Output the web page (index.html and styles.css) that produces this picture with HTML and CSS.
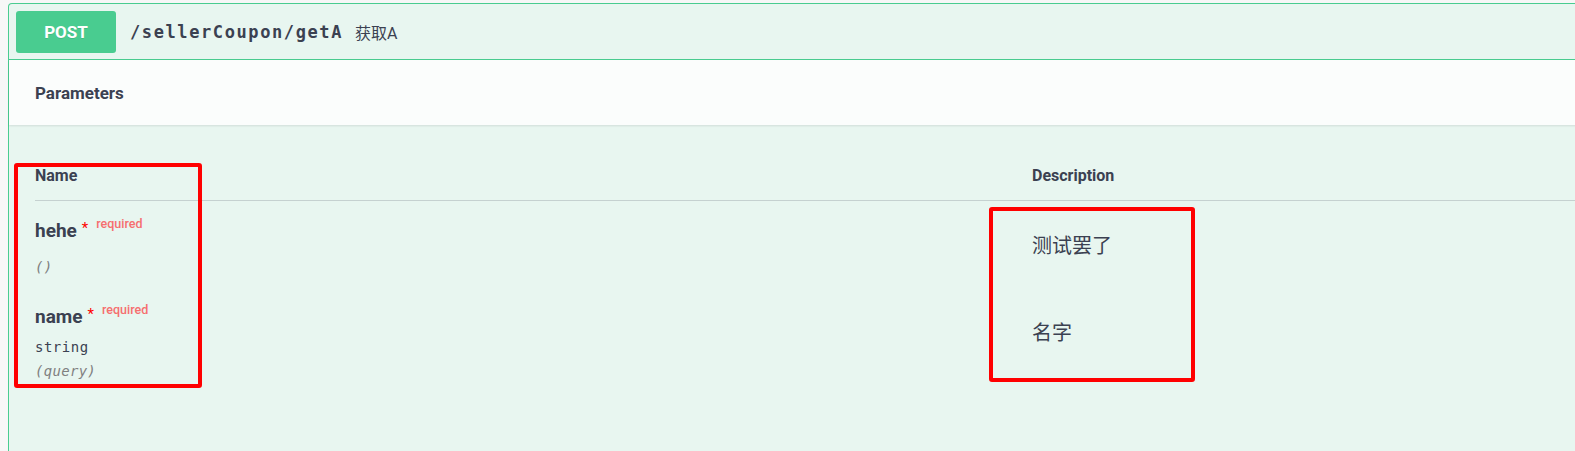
FILE: index.html
```html
<!DOCTYPE html>
<html lang="zh">
<head>
<meta charset="utf-8">
<title>POST /sellerCoupon/getA</title>
<link rel="stylesheet" href="styles.css">
</head>
<body>
<div class="page">
  <div class="opblock">
    <div class="summary">
      <span class="method">POST</span>
      <span class="path">/sellerCoupon/getA</span>
      <span class="summary-desc">获取A</span>
    </div>
    <div class="section-header">
      <h4 class="section-title">Parameters</h4>
    </div>
    <div class="params">
      <div class="params-head">
        <div class="col-name">Name</div>
        <div class="col-desc">Description</div>
      </div>
      <div class="param-row row-first">
        <div class="param-cell">
          <div class="param-name"><span class="pname">hehe</span><span class="star">*</span><span class="req">required</span></div>
          <div class="param-in in-empty">()</div>
        </div>
        <div class="param-desc">测试罢了</div>
      </div>
      <div class="param-row row-second">
        <div class="param-cell">
          <div class="param-name"><span class="pname">name</span><span class="star">*</span><span class="req">required</span></div>
          <div class="param-type">string</div>
          <div class="param-in">(query)</div>
        </div>
        <div class="param-desc">名字</div>
      </div>
    </div>
  </div>
  <div class="mark mark-name"></div>
  <div class="mark mark-desc"></div>
</div>
</body>
</html>
```

FILE: styles.css
```css
html, body {
  margin: 0;
  padding: 0;
  background: #f7f7f7;
  overflow: hidden;
  height: 100%;
}

.page {
  position: relative;
  padding: 3px 0 0 8px;
  height: 100%;
  box-sizing: border-box;
  overflow: hidden;
  color: #3b4151;
  font-family: Roboto, "Noto Sans CJK SC", sans-serif;
}

.opblock {
  width: calc(100% + 40px);
  height: 100%;
  border: 1px solid #49cc90;
  border-bottom: none;
  border-radius: 4px 4px 0 0;
  background: #e8f6f0;
  box-sizing: border-box;
}

.summary {
  display: flex;
  align-items: center;
  height: 55px;
  padding: 0 0 0 7px;
  border-bottom: 1px solid #49cc90;
}

.method {
  display: flex;
  align-items: center;
  justify-content: center;
  width: 100px;
  height: 42px;
  margin-top: 1px;
  border-radius: 3px;
  background: #49cc90;
  color: #fff;
  font-family: Roboto, sans-serif;
  font-weight: 700;
  font-size: 17px;
  text-shadow: 0 1px 0 rgba(0,0,0,.1);
}

.path {
  margin-left: 14px;
  font-family: "DejaVu Sans Mono", monospace;
  font-weight: 700;
  font-size: 17px;
  letter-spacing: 1.6px;
  color: #3b4151;
}

.summary-desc {
  margin-left: 12px;
  font-family: Roboto, "Noto Sans CJK SC", sans-serif;
  font-size: 16px;
  color: #3b4151;
}

.section-header {
  height: 65px;
  box-sizing: border-box;
  padding: 23px 26px 0;
  background: #fbfdfc;
  box-shadow: 0 1px 2px rgba(0,0,0,.1);
}

.section-title {
  margin: 0;
  font-size: 17px;
  line-height: 20px;
  font-weight: 700;
}

.params {
  padding: 41px 0 0 26px;
}

.params-head {
  display: grid;
  grid-template-columns: 997px 1fr;
  padding-bottom: 14px;
  border-bottom: 1px solid rgba(59,65,81,.2);
  font-size: 16px;
  line-height: 20px;
  font-weight: 700;
}

.param-row {
  display: grid;
  grid-template-columns: 997px 1fr;
}

.row-first {
  padding: 18px 0 11px;
}

.row-second {
  padding: 18px 0 0;
}

.param-name {
  display: flex;
  align-items: flex-start;
}

.pname {
  font-size: 19px;
  line-height: 23px;
  font-weight: 700;
}

.star {
  margin: 2px 0 0 5px;
  font-size: 15px;
  line-height: 15px;
  color: #ff0000;
}

.req {
  margin: -3px 0 0 8px;
  font-size: 12.5px;
  line-height: 15px;
  font-weight: 500;
  color: #f66f6f;
}

.param-type {
  margin-top: 11px;
  font-family: "DejaVu Sans Mono", monospace;
  font-size: 14px;
  letter-spacing: 0.5px;
  line-height: 17px;
}

.param-in {
  margin-top: 7px;
  font-family: "DejaVu Sans Mono", monospace;
  font-style: italic;
  font-size: 14px;
  letter-spacing: 0.3px;
  line-height: 17px;
  color: #808080;
}

.param-in.in-empty {
  margin-top: 17px;
}

.param-desc {
  padding-top: 12px;
  font-family: "Noto Sans CJK SC", sans-serif;
  font-size: 20px;
  line-height: 28px;
}

.row-second .param-desc {
  padding-top: 13px;
}

.mark {
  position: absolute;
  border: 4px solid #ff0000;
  border-radius: 3px;
  box-sizing: border-box;
}

.mark-name {
  left: 14px;
  top: 163px;
  width: 188px;
  height: 225px;
}

.mark-desc {
  left: 989px;
  top: 207px;
  width: 206px;
  height: 175px;
}
```
